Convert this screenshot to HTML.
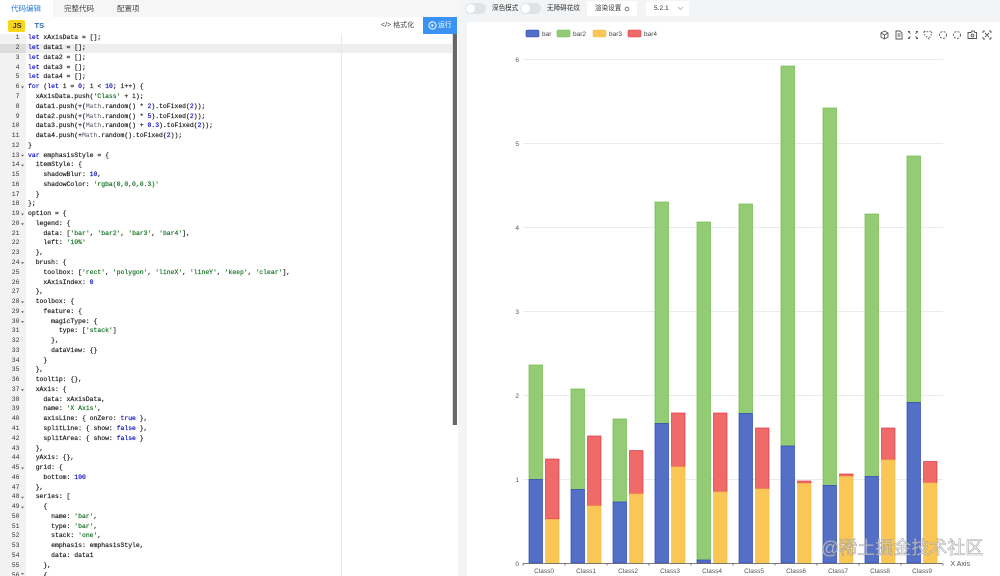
<!DOCTYPE html>
<html><head><meta charset="utf-8"><style>
html,body{margin:0;padding:0;background:#fff}
#p{position:relative;width:1000px;height:576px;overflow:hidden;background:#fff;font-family:"Liberation Sans","Noto Sans CJK SC",sans-serif;filter:blur(.3px)}
.a{position:absolute}
.t{position:absolute;white-space:nowrap;font-size:7.5px;line-height:10px;color:#444}
.m{font-size:6.6px;color:#333}
pre{position:absolute;margin:0;font-family:"Liberation Mono",monospace;font-size:6.43px;line-height:9.77px;color:#222;-webkit-text-stroke:.2px #222}
i{font-style:normal;color:#1010c0;-webkit-text-stroke:.2px #1010c0}
b{font-weight:normal;color:#0a6a1a;-webkit-text-stroke:.15px #0a6a1a}
u{text-decoration:none;color:#556;-webkit-text-stroke:0}
.sw{position:absolute;top:3px;width:21px;height:11px;border-radius:6px;background:#dfe2e6}
.sw:after{content:"";position:absolute;left:1px;top:1px;width:9px;height:9px;border-radius:50%;background:#fff}
</style></head><body><div id="p">
<div class="a" style="left:0;top:0;width:458px;height:17px;background:#f6f6f7"></div>
<div class="a" style="left:0;top:0;width:53px;height:17px;background:#fff"></div>
<div class="t" style="left:11px;top:3.500px;font-size:7.500px;color:#2b7fe0">代码编辑</div>
<div class="t" style="left:64px;top:3.500px">完整代码</div>
<div class="t" style="left:117px;top:3.500px">配置项</div>
<div class="a" style="left:8px;top:20px;width:17px;height:12px;border-radius:2px;background:#fbd618"></div>
<div class="t" style="left:12.500px;top:21px;font-weight:bold;font-size:7.500px;color:#333">JS</div>
<div class="t" style="left:34.500px;top:21px;font-weight:bold;font-size:7.500px;color:#2a6cb0">TS</div>
<div class="t" style="left:381px;top:20.500px;font-size:7px">&lt;/&gt; 格式化</div>
<div class="a" style="left:423px;top:17px;width:34px;height:17px;background:#3a93f4"></div>
<svg class="a" style="left:428px;top:21px" width="9" height="9"><circle cx="4.500" cy="4.500" r="3.600" fill="none" stroke="#fff"/><path d="M3.500 2.800 6 4.500 3.500 6.200z" fill="#fff"/></svg>
<div class="t" style="left:438px;top:20.500px;color:#fff;font-size:6.800px">运行</div>

<div class="a" style="left:0;top:34px;width:26px;height:542px;background:#f2f2f2"></div>
<div class="a" style="left:0;top:43.500px;width:26px;height:9.800px;background:#dcdcdc"></div>
<div class="a" style="left:26px;top:43.500px;width:426px;height:9.800px;background:#eeeeee"></div>
<div class="a" style="left:341px;top:34px;width:1px;height:542px;background:#e8e8e8"></div>
<div class="a" style="left:453px;top:34px;width:4px;height:391px;background:#666"></div>
<div class="a" style="left:452px;top:34px;width:1px;height:391px;background:#ddd"></div>

<pre style="left:0;top:33.400px;width:19.500px;text-align:right;color:#333;-webkit-text-stroke:0">1
2
3
4
5
6
7
8
9
10
11
12
13
14
15
16
17
18
19
20
21
22
23
24
25
26
27
28
29
30
31
32
33
34
35
36
37
38
39
40
41
42
43
44
45
46
47
48
49
50
51
52
53
54
55
56</pre>
<svg class="a" style="left:20px;top:34px" width="6" height="542" fill="#666"><path d="M1 52.500h3l-1.500 2zM1 120.800h3l-1.500 2zM1 130.600h3l-1.500 2zM1 179.500h3l-1.500 2zM1 189.200h3l-1.500 2zM1 228.300h3l-1.500 2zM1 267.400h3l-1.500 2zM1 277.200h3l-1.500 2zM1 287h3l-1.500 2zM1 355.300h3l-1.500 2zM1 433.500h3l-1.500 2zM1 462.800h3l-1.500 2zM1 472.600h3l-1.500 2zM1 539h3l-1.500 2z"/></svg>
<pre style="left:28px;top:33.400px"><i>let</i> xAxisData = [];
<i>let</i> data1 = [];
<i>let</i> data2 = [];
<i>let</i> data3 = [];
<i>let</i> data4 = [];
<i>for</i> (<i>let</i> i = <i>0</i>; i &lt; <i>10</i>; i++) {
  xAxisData.push(<b>'Class'</b> + i);
  data1.push(+(<u>Math</u>.random() * <i>2</i>).toFixed(<i>2</i>));
  data2.push(+(<u>Math</u>.random() * <i>5</i>).toFixed(<i>2</i>));
  data3.push(+(<u>Math</u>.random() + <i>0.3</i>).toFixed(<i>2</i>));
  data4.push(+<u>Math</u>.random().toFixed(<i>2</i>));
}
<i>var</i> emphasisStyle = {
  itemStyle: {
    shadowBlur: <i>10</i>,
    shadowColor: <b>'rgba(0,0,0,0.3)'</b>
  }
};
option = {
  legend: {
    data: [<b>'bar'</b>, <b>'bar2'</b>, <b>'bar3'</b>, <b>'bar4'</b>],
    left: <b>'10%'</b>
  },
  brush: {
    toolbox: [<b>'rect'</b>, <b>'polygon'</b>, <b>'lineX'</b>, <b>'lineY'</b>, <b>'keep'</b>, <b>'clear'</b>],
    xAxisIndex: <i>0</i>
  },
  toolbox: {
    feature: {
      magicType: {
        type: [<b>'stack'</b>]
      },
      dataView: {}
    }
  },
  tooltip: {},
  xAxis: {
    data: xAxisData,
    name: <b>'X Axis'</b>,
    axisLine: { onZero: <i>true</i> },
    splitLine: { show: <i>false</i> },
    splitArea: { show: <i>false</i> }
  },
  yAxis: {},
  grid: {
    bottom: <i>100</i>
  },
  series: [
    {
      name: <b>'bar'</b>,
      type: <b>'bar'</b>,
      stack: <b>'one'</b>,
      emphasis: emphasisStyle,
      data: data1
    },
    {</pre>

<div class="a" style="left:458px;top:0;width:542px;height:576px;background:#f3f4f6"></div>
<div class="sw" style="left:465px"></div>
<div class="t m" style="left:492px;top:4px">深色模式</div>
<div class="sw" style="left:520px"></div>
<div class="t m" style="left:547px;top:4px">无障碍花纹</div>
<div class="a" style="left:587px;top:1px;width:50px;height:15px;background:#fff;border-radius:2px"></div>
<div class="t m" style="left:595px;top:4px">渲染设置</div>
<svg class="a" style="left:624px;top:6px" width="6" height="6"><circle cx="3" cy="3" r="1.800" fill="none" stroke="#888" stroke-width="1.100"/></svg>
<div class="a" style="left:646px;top:1px;width:43px;height:15px;background:#fff;border-radius:2px"></div>
<div class="t m" style="left:654px;top:4px">5.2.1</div>
<svg class="a" style="left:677px;top:6px" width="7" height="5"><path d="M1 1l2.500 2.500L6 1" fill="none" stroke="#aaa" stroke-width=".8"/></svg>

<div class="a" style="left:467px;top:22px;width:533px;height:554px;background:#fff"></div>

<svg class="a" style="left:0;top:0" width="1000" height="576" font-family="Liberation Sans, sans-serif">
<g fill="none" stroke="#e8eaee"><path d="M523 59.500H943M523 143.500H943M523 227.500H943M523 311.500H943M523 395.500H943M523 479.500H943"/></g>
<g font-size="6.500" fill="#555" text-anchor="end"><text x="519" y="62">6</text><text x="519" y="146">5</text><text x="519" y="230">4</text><text x="519" y="314">3</text><text x="519" y="398">2</text><text x="519" y="482">1</text><text x="519" y="566">0</text></g>
<g id="bars" stroke-width=".7">
<g fill="#93cc75" stroke="#6fbb4e"><rect x="529" y="365" width="13.500" height="114.500"/><rect x="571" y="389" width="13.500" height="100.500"/><rect x="613" y="419" width="13.500" height="83"/><rect x="655" y="202" width="13.500" height="221.500"/><rect x="697" y="222" width="13.500" height="338"/><rect x="739" y="204" width="13.500" height="209.500"/><rect x="781" y="66" width="13.500" height="380"/><rect x="823" y="108" width="13.500" height="377.500"/><rect x="865" y="214" width="13.500" height="262.500"/><rect x="907" y="156" width="13.500" height="246.500"/></g>
<g fill="#5470c6" stroke="#2b47b8"><rect x="529" y="479.500" width="13.500" height="83.500"/><rect x="571" y="489.500" width="13.500" height="73.500"/><rect x="613" y="502" width="13.500" height="61"/><rect x="655" y="423.500" width="13.500" height="139.500"/><rect x="697" y="560" width="13.500" height="3"/><rect x="739" y="413.500" width="13.500" height="149.500"/><rect x="781" y="446" width="13.500" height="117"/><rect x="823" y="485.500" width="13.500" height="77.500"/><rect x="865" y="476.500" width="13.500" height="86.500"/><rect x="907" y="402.500" width="13.500" height="160.500"/></g>
<g fill="#f06a6a" stroke="#dc3a48"><rect x="545.500" y="459" width="13.500" height="60"/><rect x="587.500" y="436" width="13.500" height="70"/><rect x="629.500" y="450.500" width="13.500" height="43.500"/><rect x="671.500" y="413" width="13.500" height="54"/><rect x="713.500" y="413" width="13.500" height="79"/><rect x="755.500" y="428" width="13.500" height="61"/><rect x="797.500" y="481" width="13.500" height="2.500"/><rect x="839.500" y="474" width="13.500" height="2.500"/><rect x="881.500" y="428" width="13.500" height="32"/><rect x="923.500" y="461.500" width="13.500" height="21.500"/></g>
<g fill="#fac655" stroke="#f2c04a"><rect x="545.500" y="519.500" width="13.500" height="43.500"/><rect x="587.500" y="506" width="13.500" height="57"/><rect x="629.500" y="494" width="13.500" height="69"/><rect x="671.500" y="467" width="13.500" height="96"/><rect x="713.500" y="492" width="13.500" height="71"/><rect x="755.500" y="489" width="13.500" height="74"/><rect x="797.500" y="483.500" width="13.500" height="79.500"/><rect x="839.500" y="476.500" width="13.500" height="86.500"/><rect x="881.500" y="460" width="13.500" height="103"/><rect x="923.500" y="483" width="13.500" height="80"/></g>
</g>
<path d="M523 563.500H943M523 563.500v2M565 563.500v2M607 563.500v2M649 563.500v2M691 563.500v2M733 563.500v2M775 563.500v2M817 563.500v2M859 563.500v2M901 563.500v2M943 563.500v2" stroke="#555" stroke-width=".8" fill="none"/>
<g font-size="6.500" fill="#555" text-anchor="middle"><text x="544" y="573">Class0</text><text x="586" y="573">Class1</text><text x="628" y="573">Class2</text><text x="670" y="573">Class3</text><text x="712" y="573">Class4</text><text x="754" y="573">Class5</text><text x="796" y="573">Class6</text><text x="838" y="573">Class7</text><text x="880" y="573">Class8</text><text x="922" y="573">Class9</text></g>
<text x="950.500" y="566" font-size="7" fill="#555">X Axis</text>
<g stroke-width=".6"><rect x="526" y="30" width="13" height="7" rx="1.500" fill="#5470c6" stroke="#2b47b8"/><rect x="557" y="30" width="13" height="7" rx="1.500" fill="#93cc75" stroke="#6fbb4e"/><rect x="593" y="30" width="13" height="7" rx="1.500" fill="#fac655" stroke="#f2c04a"/><rect x="628" y="30" width="13" height="7" rx="1.500" fill="#f06a6a" stroke="#dc3a48"/></g>
<g font-size="6.500" fill="#444"><text x="542" y="36">bar</text><text x="573" y="36">bar2</text><text x="609" y="36">bar3</text><text x="644" y="36">bar4</text></g>
<g fill="none" stroke="#555" stroke-width=".9" transform="translate(0 1)">
<path d="M881 32l3.500-2 3.500 2v4l-3.500 2-3.500-2zM881 32l3.500 2 3.500-2M884.500 34v4"/>
<path d="M896 30h4l2 2v6h-6zM897.500 33h3M897.500 35h3"/>
<path d="M908 30.500h2M916 30.500h2M908 37.500h2M916 37.500h2M908.500 31l2 1.500M917.500 31l-2 1.500M908.500 37l2-1.500M917.500 37l-2-1.500"/>
<path d="M924 30l2 1 5-1 1 2-2 4-1 2-3-3-2-2z" stroke-dasharray="1.500 1.200"/>
<circle cx="943" cy="34" r="3.500" stroke-dasharray="2 1.400"/>
<circle cx="957" cy="34" r="3.500" stroke-dasharray="2 1.400"/>
<path d="M968 31.500h3l1-1.500h2l1 1.500h1.500v6h-8.500z"/><circle cx="972.500" cy="34.500" r="1.400"/>
<path d="M983 30h2M989 30h2M983 38h2M989 38h2M983 30v2M991 30v2M983 38v-2M991 38v-2M985 32l4 4M989 32l-4 4"/>
</g>
<text x="821" y="554" font-size="18" fill="#fff" fill-opacity=".55" stroke="#888" stroke-opacity=".75" stroke-width=".6" font-family="Liberation Sans, Noto Sans CJK SC, sans-serif">@稀土掘金技术社区</text>
</svg>
</div></body></html>
